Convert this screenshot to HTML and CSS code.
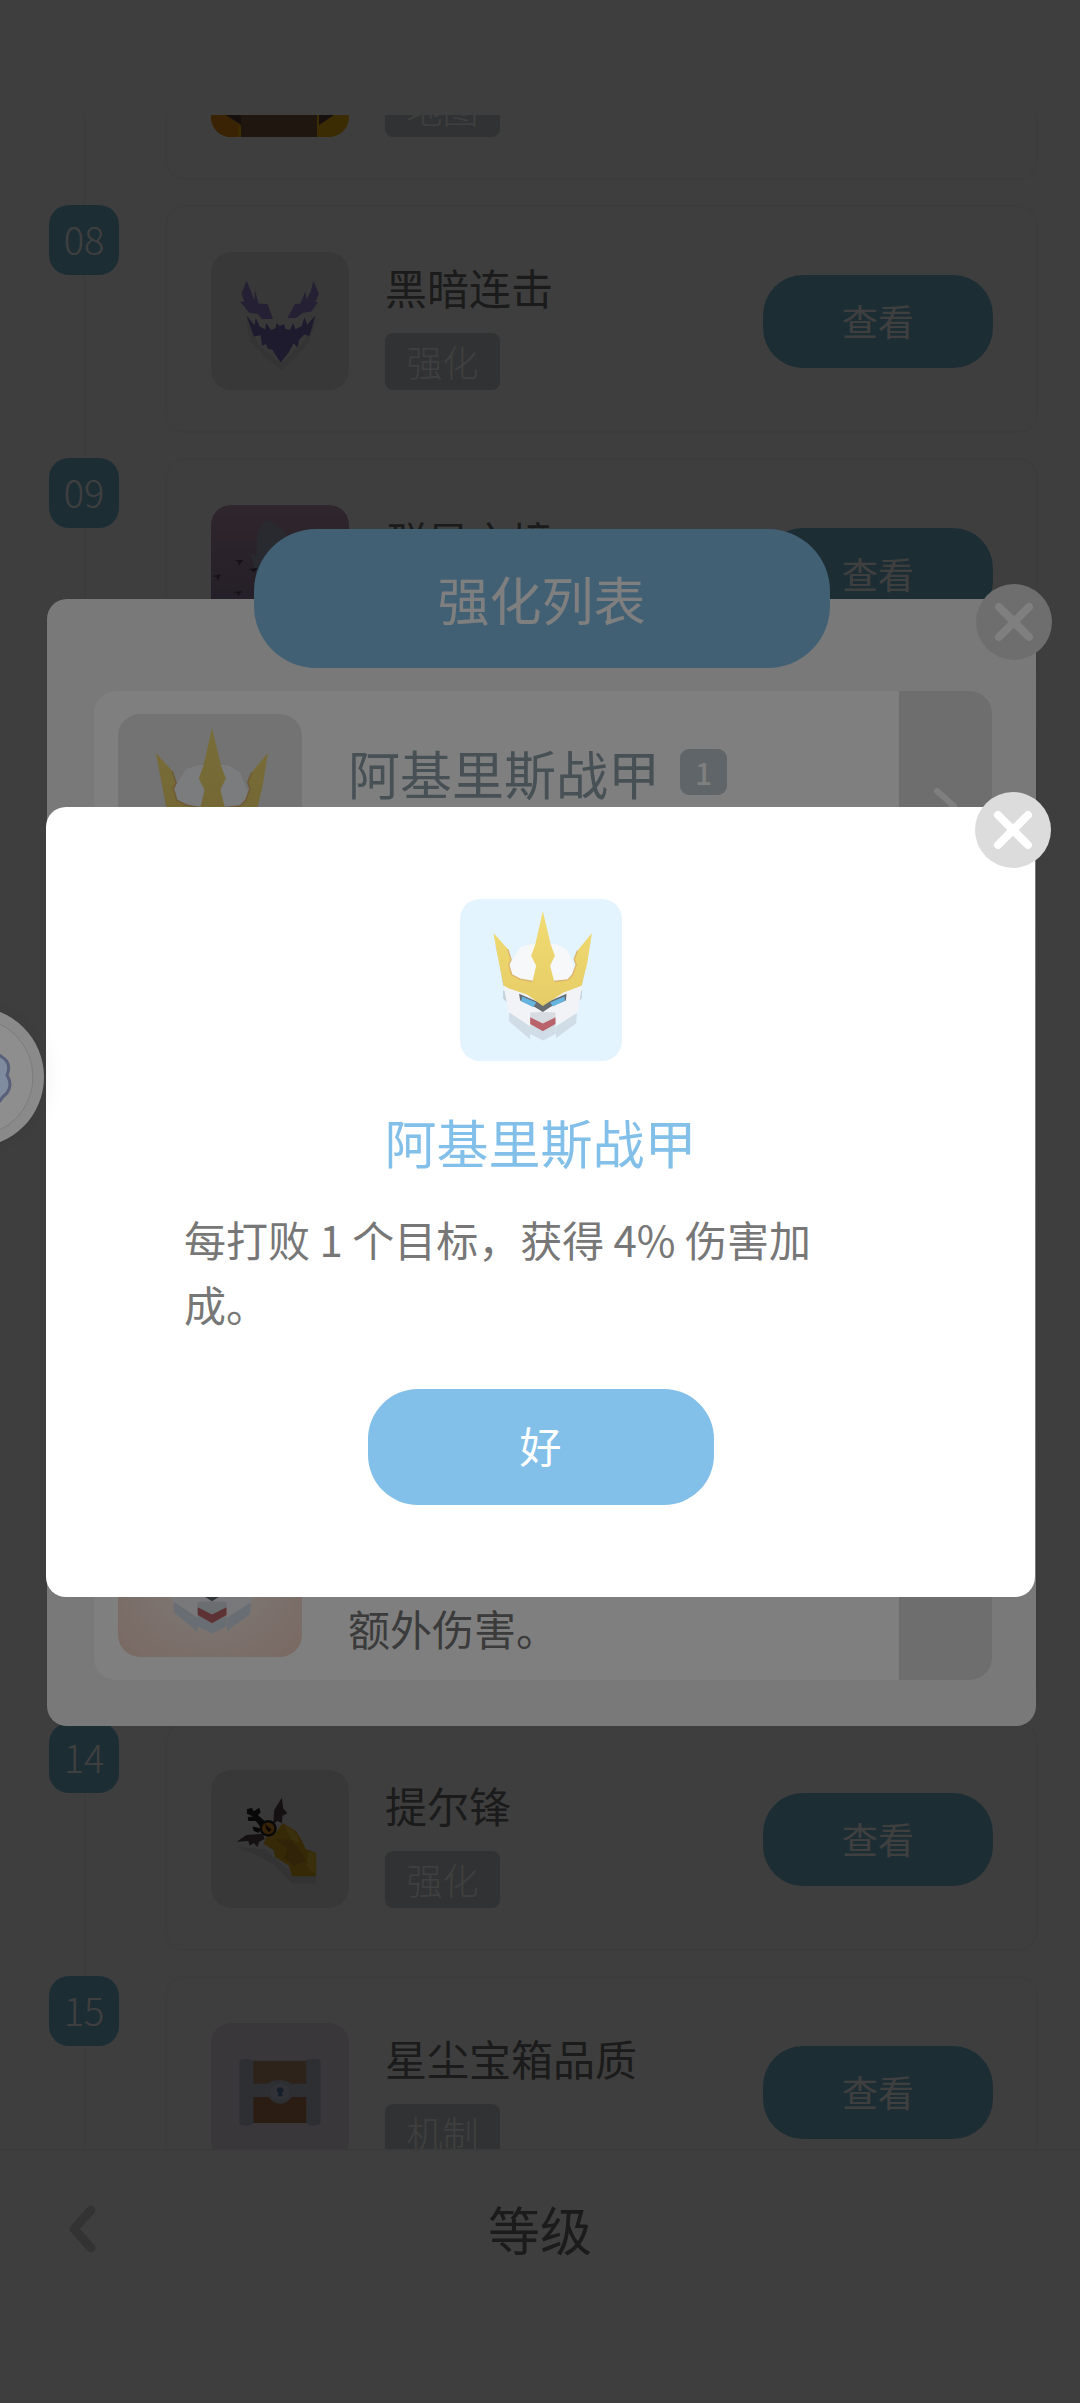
FILE: index.html
```html
<!DOCTYPE html>
<html lang="zh-CN">
<head>
<meta charset="utf-8">
<meta name="viewport" content="width=device-width, initial-scale=1">
<title>等级</title>
<link rel="stylesheet" href="styles.css">
</head>
<body>
<svg class="defs" aria-hidden="true">
  <defs>
    <linearGradient id="gold" x1="0" y1="0" x2="0" y2="1">
      <stop offset="0" stop-color="#f2dc72"/>
      <stop offset="1" stop-color="#e6cc66"/>
    </linearGradient>
    <symbol id="armor" viewBox="60 58 485 485">
      <path fill="#f7f8fa" d="M205 258 228 222 240 203 268 194 308 190 352 194 382 212 402 262 395 300H215Z"/>
      <path fill="#b9c3cc" d="M164 188 176 240 190 320 194 318 180 240ZM451 188 440 240 424 320 420 318 436 240Z"/>
      <path fill="#c3d0da" d="M189 332 206 338V372L189 356ZM426 330 410 338V370L424 356Z"/>
      <path fill="#d0dde6" d="M207 395 270 440V478L207 425ZM410 398 347 440V475L408 430ZM270 432 308 455 346 432V462L309 482 270 462Z"/>
      <path fill="#f2f3f6" d="M190 316H426L412 398 347 438V412L308 430 270 412V438L205 396Z"/>
      <path fill="#d7dce2" d="M270 398 308 396 346 398V412L308 432 270 412Z"/>
      <path fill="#666c70" d="M237 342 308 372 379 342 377 362 333 380 308 396 285 382 240 362Z"/>
      <path fill="#66b4e0" d="M246 350 288 368 280 382 243 364ZM372 350 330 368 338 380 375 362Z"/>
      <path fill="#b8646a" d="M270 412 308 431 346 412V432L308 454 270 432Z"/>
      <path fill="url(#gold)" d="M308 95 332 195 344 228 330 258 342 305 383 300 397 285 408 255 402 238 412 212 455 160 441 250 424 318 370 338 308 378 262 345 205 325 190 316 175 240 160 160 203 208 213 240 206 255 215 285 240 298 277 305 288 258 273 228 285 195Z"/>
      <path fill="none" stroke="#dcb46c" stroke-width="4" d="M203 208 213 240 206 255 215 285 240 298 277 305M342 305 383 300 397 285 408 255 402 238 412 212"/>
    </symbol>
    <symbol id="close" viewBox="0 0 40 40">
      <path d="M5 5 35 35M35 5 5 35" fill="none" stroke="currentColor" stroke-width="8" stroke-linecap="round"/>
    </symbol>
    <symbol id="next" viewBox="0 0 24 36">
      <path d="M3 3 20 18 3 33" fill="none" stroke="currentColor" stroke-width="6" stroke-linecap="round" stroke-linejoin="round"/>
    </symbol>
  </defs>
</svg>

<div class="page">
  <main class="viewport">
    <ol class="levels">
      <li class="level">
        <span class="no"></span>
        <article class="card">
          <svg class="thumb" viewBox="0 0 138 138" preserveAspectRatio="none" aria-hidden="true">
            <rect width="138" height="138" fill="#f0b010"/>
            <path fill="#e88c10" d="M0 106 14 114 28 126 26 138H0Z"/>
            <path fill="#5a3c34" d="M12 114 30 126V104H108V126L126 114V80H12Z"/>
            <path fill="#7c5840" d="M30 60H106V138H30Z"/>
          </svg>
          <div class="info"><span class="tag">地图</span></div>
        </article>
      </li>
      <li class="level">
        <span class="no">08</span>
        <article class="card">
          <svg class="thumb grey" viewBox="613 485 403 416" preserveAspectRatio="none" aria-hidden="true">
            <path fill="#d2d2d2" d="M714 682 726 752 750 780 770 800 818 842 866 798 900 752 926 680 880 760 816 822 750 760Z"/>
            <path fill="#9482d0" d="M717 572 731 607 739 630 742 602 752 640 778 642 794 686 762 688 750 672 724 668 698 634 710 636 702 610ZM912 572 904 605 892 627 888 604 874 640 858 642 836 684 862 684 882 668 906 664 926 636 918 636 928 610Z"/>
            <path fill="#7c6cbc" d="M716 676 740 706 744 684 756 710 772 718 774 698 788 720 802 714 804 700 814 708 826 702 830 716 844 720 852 698 860 718 878 708 886 682 894 704 918 676 908 714 900 738 886 734 870 750 866 774 854 760 840 788 816 818 792 780 778 776 774 762 762 768 758 736 738 740Z"/>
          </svg>
          <div class="info"><h2>黑暗连击</h2><span class="tag">强化</span></div>
          <button class="view" type="button">查看</button>
        </article>
      </li>
      <li class="level">
        <span class="no">09</span>
        <article class="card">
          <svg class="thumb" viewBox="613 195 403 416" preserveAspectRatio="none" aria-hidden="true">
            <defs>
              <linearGradient id="dusk" x1="0" y1="0" x2="0" y2="1">
                <stop offset="0" stop-color="#c098b4"/>
                <stop offset="1" stop-color="#80709c"/>
              </linearGradient>
            </defs>
            <rect x="613" y="195" width="403" height="416" fill="url(#dusk)"/>
            <path fill="#a4a8c0" d="M748 290 762 250 782 242 822 270 832 285V400H745L728 340 745 350Z"/>
            <path fill="#54445c" d="M680 362 708 360 694 378 692 366ZM616 410 642 404 632 424 630 412ZM676 458 704 454 692 470 690 460ZM724 388 750 384 740 398Z"/>
          </svg>
          <div class="info"><h2>群星之境</h2><span class="tag"></span></div>
          <button class="view" type="button">查看</button>
        </article>
      </li>
      <li class="level"><span class="no"></span><article class="card"></article></li>
      <li class="level"><span class="no"></span><article class="card"></article></li>
      <li class="level"><span class="no"></span><article class="card"></article></li>
      <li class="level"><span class="no"></span><article class="card"></article></li>
      <li class="level">
        <span class="no">14</span>
        <article class="card">
          <svg class="thumb grey" viewBox="613 630 403 416" preserveAspectRatio="none" aria-hidden="true">
            <path fill="#cfcfcf" d="M688 862 736 866 770 868 850 940 920 950V972H850L800 918 740 884Z"/>
            <path fill="#dba41c" d="M822 790 862 815 880 846 890 868 920 880V950H850L840 918 800 892 796 872 766 852 776 830 800 822Z"/>
            <path fill="#c08c1c" d="M800 838 848 842 878 880 890 906 854 918 826 896 836 868Z"/>
            <path fill="#e8c038" d="M826 794 862 820 872 850 846 838ZM896 876 920 882V946L894 920Z"/>
            <path fill="#54444a" d="M820 714 824 746 836 760 822 768 820 790 806 784 794 796 798 750ZM688 846 716 826 764 822 770 838 754 846 748 862 738 850 726 858 722 844Z"/>
            <path fill="#262222" d="M718 748 732 744 738 754 754 744 758 758 750 766 772 786 756 800 744 784 722 784 720 772 736 770 718 762ZM734 800 760 806 752 820 738 814Z"/>
            <circle cx="780" cy="806" r="25" fill="#2a2424"/>
            <circle cx="780" cy="806" r="18" fill="#d88820"/>
            <path fill="#2a1c10" d="M772 794 790 810 782 818 774 808Z"/>
          </svg>
          <div class="info"><h2>提尔锋</h2><span class="tag">强化</span></div>
          <button class="view" type="button">查看</button>
        </article>
      </li>
      <li class="level">
        <span class="no">15</span>
        <article class="card">
          <svg class="thumb lilac" viewBox="518 190 339 414" preserveAspectRatio="none" aria-hidden="true">
            <path fill="#b88c68" d="M620 303H754V374H620Z"/>
            <path fill="#ac7450" d="M620 412H754V490H620Z"/>
            <path fill="#b4bccc" d="M588 305Q588 297 604 297T622 305V372H658Q666 362 686 362T714 372H752V305Q752 297 770 297T787 305V488Q787 498 770 498T752 488V412H716Q706 432 688 432T660 412H622V488Q622 498 604 498T588 488Z"/>
            <circle cx="687" cy="397" r="24" fill="#c0cadc"/>
            <circle cx="688" cy="391" r="8" fill="#5478a8"/>
            <path fill="#5478a8" d="M685 394H691L694 410H682Z"/>
          </svg>
          <div class="info"><h2>星尘宝箱品质</h2><span class="tag">机制</span></div>
          <button class="view" type="button">查看</button>
        </article>
      </li>
    </ol>
  </main>

  <nav class="bar">
    <button class="back" type="button" aria-label="返回">
      <svg viewBox="0 0 28 48" aria-hidden="true"><path d="M23 5 6 24 23 43" fill="none" stroke="currentColor" stroke-width="9" stroke-linecap="round" stroke-linejoin="round"/></svg>
    </button>
    <h1>等级</h1>
  </nav>
</div>

<div class="overlay overlay-list">
  <section class="sheet" role="dialog" aria-labelledby="sheet-title">
    <h2 class="sheet-title" id="sheet-title">强化列表</h2>
    <button class="close" type="button" aria-label="关闭"><svg aria-hidden="true"><use href="#close"/></svg></button>
    <ul class="boosts">
      <li class="boost">
        <svg class="boost-icon" aria-hidden="true"><use href="#armor"/></svg>
        <div class="boost-text first"><h3>阿基里斯战甲</h3><span class="count">1</span></div>
        <button class="next" type="button" aria-label="详情"><svg aria-hidden="true"><use href="#next"/></svg></button>
      </li>
      <li class="boost">
        <svg class="boost-icon" aria-hidden="true"><use href="#armor"/></svg>
        <div class="boost-text"></div>
        <button class="next" type="button" aria-label="详情"><svg aria-hidden="true"><use href="#next"/></svg></button>
      </li>
      <li class="boost">
        <svg class="boost-icon" aria-hidden="true"><use href="#armor"/></svg>
        <div class="boost-text"></div>
        <button class="next" type="button" aria-label="详情"><svg aria-hidden="true"><use href="#next"/></svg></button>
      </li>
      <li class="boost">
        <svg class="boost-icon peach" aria-hidden="true"><use href="#armor"/></svg>
        <div class="boost-text last"><p>额外伤害。</p></div>
        <button class="next" type="button" aria-label="详情"><svg aria-hidden="true"><use href="#next"/></svg></button>
      </li>
    </ul>
  </section>
</div>

<div class="overlay">
  <section class="dialog" role="dialog" aria-modal="true" aria-labelledby="dialog-title">
    <button class="close" type="button" aria-label="关闭"><svg aria-hidden="true"><use href="#close"/></svg></button>
    <svg class="dialog-icon" aria-hidden="true"><use href="#armor"/></svg>
    <h2 id="dialog-title">阿基里斯战甲</h2>
    <p>每打败 1 个目标，获得 4% 伤害加成。</p>
    <button class="ok" type="button">好</button>
  </section>
</div>

<button class="assist" type="button" aria-label="助手">
  <svg viewBox="0 0 140 140" aria-hidden="true">
    <circle cx="70" cy="70" r="70" fill="#8a8a8a"/>
    <circle cx="70" cy="70" r="59" fill="#8e8e8e" stroke="#7c7c7c" stroke-width="1"/>
    <path d="M62 50Q82 38 98 50Q108 56 103 68Q109 78 103 86Q98 90 96 94Q80 106 62 94Z" fill="#7f8b9e" stroke="#59617a" stroke-width="3"/>
  </svg>
</button>
</body>
</html>
```
FILE: styles.css
```css
* { box-sizing: border-box; }

body {
  margin: 0;
  background: #f8f8f8;
  color: #777;
  font-family: "Noto Sans CJK SC", "Noto Sans", sans-serif;
  font-size: 42px;
}

h1, h2, h3, p, ol, ul { margin: 0; padding: 0; font-weight: 400; }
ol, ul { list-style: none; }
svg { display: block; }
button { border: 0; padding: 0; font: inherit; cursor: pointer; }
.defs { position: absolute; width: 0; height: 0; }

/* Level list */
.page {
  display: flex;
  flex-direction: column;
  height: 100vh;
  padding-top: 115px;
}

.viewport { flex: 1; min-height: 0; overflow: hidden; }

.levels {
  display: flex;
  flex-direction: column;
  gap: 25px;
  margin-top: -163px;
  padding: 0 42px 0 49px;
  background: linear-gradient(#f2f2f2, #f2f2f2) 84px 0 / 2px 100% no-repeat;
}

.level { display: flex; gap: 46px; }

.no {
  flex: none;
  width: 70px;
  height: 70px;
  border-radius: 20px;
  background: #74b4d0;
  color: #fff;
  font-size: 38px;
  font-weight: 300;
  line-height: 68px;
  text-align: center;
}

.level:first-child .no { visibility: hidden; }

.card {
  flex: 1;
  display: flex;
  align-items: center;
  gap: 36px;
  min-height: 228px;
  padding: 47px 45px 43px 46px;
  border-radius: 20px;
  background: #fbfbfb;
  box-shadow: inset 0 0 0 2px #f3f3f3;
}

.thumb { flex: none; width: 138px; height: 138px; border-radius: 20px; }
.grey { background: #e2e2e2; }
.lilac { background: #e8deee; }

.info {
  flex: 1;
  display: flex;
  flex-direction: column;
  align-items: flex-start;
  justify-content: flex-end;
  gap: 16px;
  height: 138px;
}

.info h2 { color: #6c6c6c; font-size: 42px; line-height: 60px; }

.tag {
  min-width: 115px;
  min-height: 57px;
  border-radius: 8px;
  background: #c4cace;
  color: #fff;
  font-size: 36px;
  font-weight: 300;
  line-height: 57px;
  text-align: center;
}

.view {
  width: 230px;
  height: 93px;
  padding-bottom: 2px;
  border-radius: 40px;
  background: #74b4d0;
  color: #fff;
  font-size: 36px;
}

.bar {
  display: grid;
  grid-template-columns: 1fr auto 1fr;
  align-items: center;
  height: 254px;
  padding: 0 68px 96px;
  border-top: 2px solid #efefef;
  background: #fbfbfb;
}

.bar h1 { color: #6c6c6c; font-size: 52px; line-height: 72px; }
.back { width: 28px; background: none; color: #cfcfcf; }

/* Dialogs */
.overlay {
  position: fixed;
  inset: 0;
  display: flex;
  align-items: center;
  padding: 0 45px 0 46px;
  background: rgba(0, 0, 0, .5);
}

.overlay-list { padding: 0 44px 78px 47px; }

.sheet, .dialog { position: relative; flex: 1; border-radius: 20px; }
.sheet { padding: 92px 44px 46px 47px; background: #f3f3f3; }

.sheet-title {
  position: absolute;
  top: -70px;
  left: 50%;
  width: 576px;
  margin-left: -288px;
  border-radius: 62px;
  background: #82c0e9;
  color: #fff;
  font-size: 52px;
  line-height: 139px;
  text-align: center;
}

.close {
  position: absolute;
  top: -15px;
  right: -16px;
  display: grid;
  place-items: center;
  width: 76px;
  height: 76px;
  border-radius: 50%;
  background: #dcdcdc;
  color: #fff;
}

.close svg { width: 40px; height: 40px; }

.boosts { display: flex; flex-direction: column; gap: 23px; }

.boost {
  display: flex;
  overflow: hidden;
  border-radius: 22px;
  background: #fff;
}

.boost-icon {
  flex: none;
  width: 184px;
  height: 184px;
  margin: 23px 46px 23px 24px;
  border-radius: 22px;
  background: #e6e6e6;
}

.peach { background: radial-gradient(#fbece6 30%, #f2d2c4); }

.boost-text { flex: 1; display: flex; }
.first { align-items: flex-start; gap: 20px; padding-top: 52px; }
.last { align-items: flex-end; padding-bottom: 20px; }
.boost h3 { color: #8fa2ab; font-size: 52px; line-height: 60px; }
.boost p { line-height: 65px; }

.count {
  width: 47px;
  margin-top: 6px;
  border-radius: 9px;
  background: #bfcad1;
  color: #fff;
  font-size: 30px;
  font-weight: 500;
  line-height: 46px;
  text-align: center;
}

.next {
  display: grid;
  place-items: center;
  width: 93px;
  background: #dcdcdc;
  color: #fff;
}

.next svg { width: 24px; height: 36px; }

.dialog {
  display: flex;
  flex-direction: column;
  align-items: center;
  padding: 92px 138px;
  background: #fff;
}

.dialog-icon {
  width: 162px;
  height: 162px;
  border-radius: 20px;
  background: #e4f4fe;
}

.dialog h2 {
  margin-top: 45px;
  color: #82c0e9;
  font-size: 52px;
  line-height: 72px;
}

.dialog p {
  align-self: stretch;
  margin-top: 28px;
  padding-right: 24px;
  line-height: 65px;
}

.ok {
  width: 346px;
  height: 116px;
  margin-top: 53px;
  padding-bottom: 4px;
  border-radius: 50px;
  background: #82c0e9;
  color: #fff;
  font-size: 42px;
}

/* Floating helper, docked half off the left edge */
.assist {
  position: fixed;
  top: 1007px;
  left: -96px;
  width: 140px;
  height: 140px;
  border-radius: 50%;
  background: none;
  box-shadow: 0 0 24px rgba(0, 0, 0, .08);
}
```
